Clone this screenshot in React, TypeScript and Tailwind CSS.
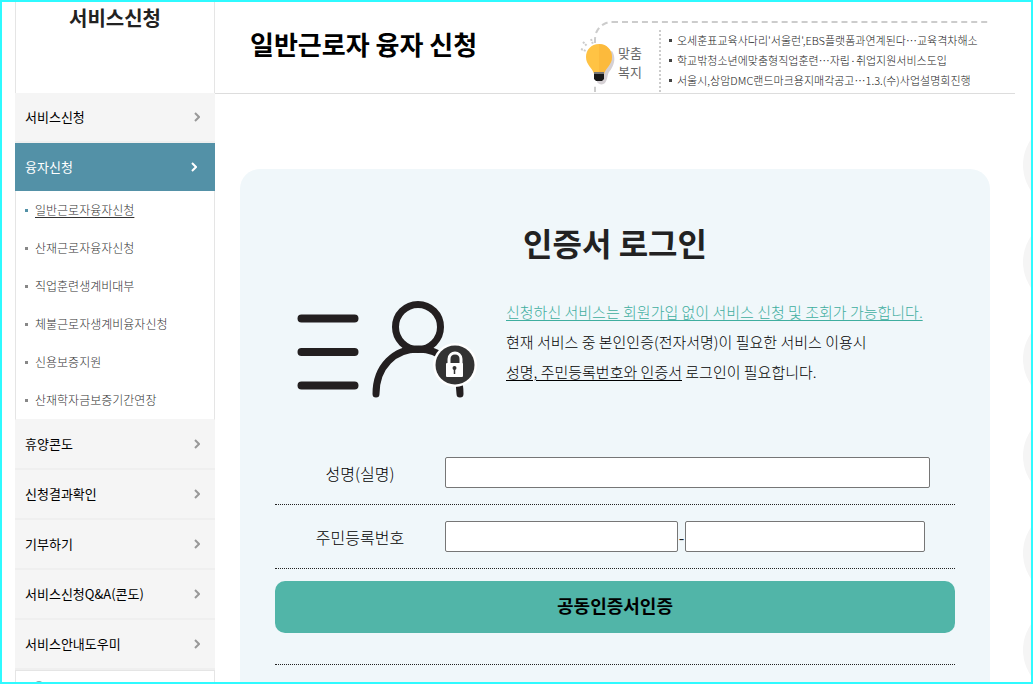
import { useState } from "react";

const SUB_MENU = [
  "일반근로자융자신청",
  "산재근로자융자신청",
  "직업훈련생계비대부",
  "체불근로자생계비융자신청",
  "신용보증지원",
  "산재학자금보증기간연장",
];

const MENU = ["휴양콘도", "신청결과확인", "기부하기", "서비스신청Q&A(콘도)", "서비스안내도우미"];

const NEWS = [
  "오세훈표교육사다리'서울런',EBS플랫폼과연계된다…교육격차해소",
  "학교밖청소년에맞춤형직업훈련…자립·취업지원서비스도입",
  "서울시,상암DMC랜드마크용지매각공고…1.3.(수)사업설명회진행",
];

const QUICK = [0, 1, 2, 3, 4, 5];

function Chevron({ className }: { className: string }) {
  return (
    <svg viewBox="0 0 6 10" className={`h-[10px] w-[6px] ${className}`} fill="none" stroke="currentColor" strokeWidth="2">
      <path d="M1 1l4 4-4 4" />
    </svg>
  );
}

function MenuItem({ label }: { label: string }) {
  return (
    <a href="#" className="flex h-[50px] items-center justify-between border-b-2 border-[#efefef] bg-[#f5f5f5] pr-[15px] pl-[10px] text-[13px] text-black">
      {label}
      <Chevron className="text-[#999]" />
    </a>
  );
}

function Sidebar() {
  const [current, setCurrent] = useState(0);

  return (
    <nav className="w-[200px] shrink-0">
      <div className="h-[91px] border-x border-[#e5e5e5] text-center">
        <h2 className="text-[20px] leading-[32px] font-bold text-[#222]">서비스신청</h2>
      </div>
      <MenuItem label="서비스신청" />
      <a href="#" className="flex h-12 items-center justify-between bg-[#5391a7] pr-[18px] pl-[10px] text-[13px] text-white">
        융자신청
        <Chevron className="text-white" />
      </a>
      <ul className="border-x border-b border-[#e5e5e5] border-b-[#f5f5f5]">
        {SUB_MENU.map((label, i) => (
          <li key={label} className="flex h-[38px] items-center gap-[7px] pl-[9px]">
            <span className={`size-[3px] ${i === current ? "bg-[#5391a7]" : "bg-[#888]"}`} />
            <a
              href="#"
              onClick={() => setCurrent(i)}
              className={`text-[12px] font-light ${i === current ? "text-[#333] underline underline-offset-2" : "text-[#333]"}`}
            >
              {label}
            </a>
          </li>
        ))}
      </ul>
      {MENU.map((label) => (
        <MenuItem key={label} label={label} />
      ))}
      <div className="h-20 border border-[#e5e5e5] pt-[10px] pl-[19px]">
        <div className="size-2 rounded-full bg-[#8fa3a3]" />
      </div>
    </nav>
  );
}

function Bulb() {
  return (
    <svg viewBox="0 0 36 50" className="absolute top-[15px] -left-[16px] h-[50px] w-[36px]">
      <path d="M1 11l5 2M3 4l4 4M11 1l2 5" stroke="#ccc" strokeWidth="2" strokeDasharray="2 1" />
      <path d="M12 18h9v30h-9z" fill="#fff" />
      <path d="M32 13c5 8 1 16-3 21-2 3-1 7-4 11-2 2-6 2-8-1V20z" fill="#d5d0d4" />
      <path d="M19 6C11 6 6 12 6 19c0 8 6 10 8 17h10c2-7 8-9 8-17 0-7-5-13-13-13z" fill="#ffc344" />
      <path d="M19 6c8 0 13 6 13 13 0 8-6 10-8 17h-5z" fill="#f9b233" opacity=".5" />
      <path d="M14 34h10v3H14z" fill="#777" />
      <path d="M14 36h10v5l-2 2h-6l-2-2z" fill="#181818" />
    </svg>
  );
}

function News() {
  return (
    <div className="relative mt-[19px] mr-[27px] flex h-[71px] w-[394px] rounded-tl-[18px] border-t-2 border-l-2 border-dashed border-[#ccc]">
      <Bulb />
      <div className="w-[63px] pt-[20px] pl-[22px] text-[13px] leading-[19px] text-[#666]">
        <div>맞춤</div>
        <div>복지</div>
      </div>
      <ul className="mt-[7px] flex-1 border-l-2 border-dotted border-[#ccc] pl-2">
        {NEWS.map((item) => (
          <li key={item} className="flex h-5 items-center gap-[5px]">
            <span className="size-[3px] shrink-0 bg-[#444]" />
            <a href="#" className="text-[11px] font-light whitespace-nowrap text-[#222]">
              {item}
            </a>
          </li>
        ))}
      </ul>
    </div>
  );
}

function MemberIcon() {
  return (
    <svg viewBox="0 0 182 100" className="mt-[2px] ml-[22px] h-[100px] w-[182px] shrink-0" fill="none">
      <g stroke="#231f20" strokeLinecap="round">
        <path d="M4.500 19.500h53M4.500 53h53M4.500 86.500h53" strokeWidth="8" />
        <circle cx="121" cy="28" r="22.500" strokeWidth="7" />
        <path d="M79 95c0-28 19-45 42-45s42 17 42 45" strokeWidth="7" />
      </g>
      <circle cx="158" cy="66" r="22" fill="#fff" />
      <circle cx="158" cy="66" r="19.500" fill="#333" />
      <path d="M152 65v-5c0-8 12-8 12 0v5" stroke="#fff" strokeWidth="3" />
      <rect x="149" y="64" width="17" height="14" rx="1" fill="#fff" />
      <circle cx="157.500" cy="69" r="2" fill="#333" />
      <path d="M157.500 69v6" stroke="#333" strokeWidth="1.500" />
    </svg>
  );
}

function LoginCard() {
  const input = "h-[31px] rounded-[2px] border border-[#767676] bg-white px-2 text-[15px]";

  return (
    <section className="mt-[75px] mr-[25px] ml-[25px] rounded-[20px] bg-[#f0f7fa] px-[35px] pt-12 pb-20">
      <h2 className="text-center text-[32px] leading-[50px] font-bold text-[#222]">인증서 로그인</h2>
      <div className="mt-[30px] flex gap-[27px]">
        <MemberIcon />
        <p className="text-[15px] leading-[30px] font-light whitespace-nowrap text-black">
          <span className="text-[#3fae9f] underline underline-offset-2">
            신청하신 서비스는 회원가입 없이 서비스 신청 및 조회가 가능합니다.
          </span>
          <br />
          현재 서비스 중 본인인증(전자서명)이 필요한 서비스 이용시
          <br />
          <span className="underline underline-offset-2">성명, 주민등록번호와 인증서</span> 로그인이 필요합니다.
        </p>
      </div>
      <form className="mt-[42px]" onSubmit={(e) => e.preventDefault()}>
        <div className="flex h-[64px] items-center border-b border-dotted border-[#222]">
          <label htmlFor="name" className="w-1/4 text-center text-[16px] font-light text-black">
            성명(실명)
          </label>
          <div className="w-3/4">
            <input id="name" className={`${input} w-[95%]`} />
          </div>
        </div>
        <div className="flex h-[64px] items-center border-b border-dotted border-[#222]">
          <label htmlFor="rrn1" className="w-1/4 text-center text-[16px] font-light text-black">
            주민등록번호
          </label>
          <div className="flex w-3/4 items-center">
            <input id="rrn1" className={`${input} w-[233px]`} />
            <span className="w-[7px] text-center text-[16px] text-[#222]">-</span>
            <input type="password" aria-label="주민등록번호 뒷자리" className={`${input} w-[47%]`} />
          </div>
        </div>
        <button className="mt-3 block h-[52px] w-full rounded-[10px] bg-[#51b5a8] pb-1 text-[18px] font-bold text-black">
          공동인증서인증
        </button>
      </form>
      <div className="mt-[31px] border-b border-dotted border-[#222]" />
    </section>
  );
}

export default function App() {
  return (
    <div className="relative flex h-screen overflow-hidden border-2 border-[#2ffaff] bg-white pr-4 pl-[13px] font-['Noto_Sans_CJK_KR',sans-serif]">
      <Sidebar />
      <main className="min-w-0 flex-1">
        <header className="flex h-[92px] justify-between border-b border-[#ddd] pl-[35px]">
          <h1 className="text-[26px] leading-[84px] font-bold whitespace-nowrap text-black">일반근로자 융자 신청</h1>
          <News />
        </header>
        <LoginCard />
      </main>
      {/* quick menu peeking in from the right edge */}
      <div className="absolute top-[118px] -right-[82px] flex flex-col gap-[7px]">
        {QUICK.map((n) => (
          <div key={n} className="size-[90px] rounded-full bg-[#f5f5f5]" />
        ))}
      </div>
    </div>
  );
}
